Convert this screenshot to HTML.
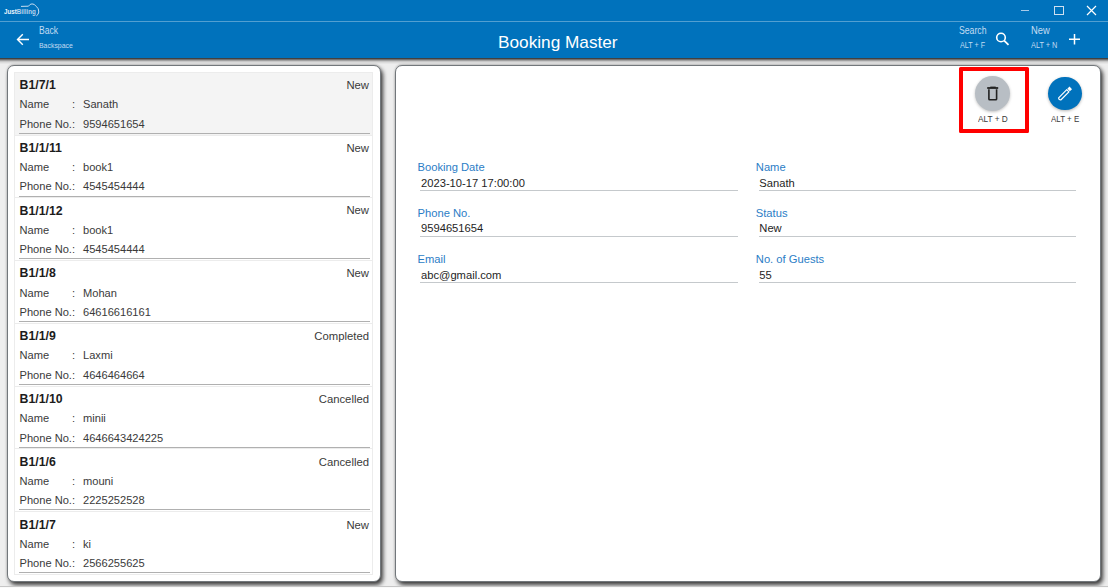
<!DOCTYPE html>
<html><head><meta charset="utf-8"><style>
html,body{margin:0;padding:0;}
body{width:1108px;height:588px;overflow:hidden;position:relative;background:#eeeeee;font-family:"Liberation Sans", sans-serif;}
.t{position:absolute;white-space:nowrap;line-height:1;}
</style></head><body>
<div style="position:absolute;left:0;top:0;width:1108px;height:58px;background:#0072bc;"></div>
<div style="position:absolute;left:0;top:21px;width:1108px;height:1px;background:rgba(255,255,255,0.32);"></div>
<div style="position:absolute;left:0;top:58px;width:1108px;height:1px;background:rgba(0,0,0,0.73);"></div>
<div style="position:absolute;left:0;top:59px;width:1108px;height:1px;background:rgba(0,0,0,0.53);"></div>
<div style="position:absolute;left:0;top:60px;width:1108px;height:1px;background:rgba(0,0,0,0.33);"></div>
<div style="position:absolute;left:0;top:61px;width:1108px;height:1px;background:rgba(0,0,0,0.16);"></div>
<div style="position:absolute;left:0;top:62px;width:1108px;height:1px;background:rgba(0,0,0,0.08);"></div>
<div style="position:absolute;left:0;top:63px;width:1108px;height:1px;background:rgba(0,0,0,0.03);"></div>
<div class="t" style="left:4.00px;top:7.87px;font-size:7px;color:#eef5fb;font-weight:bold;transform:scaleX(0.8888);transform-origin:0 0;">Just<span style="color:#b9d3ec">Billing</span></div>
<svg style="position:absolute;left:20px;top:3px" width="20" height="14" viewBox="0 0 20 14"><path d="M1 3.4 L8.5 3.2 Q10 0.8 12 0.9 Q14.8 1 15.5 2.8 Q19.2 5 18.8 9 Q18.5 11.8 16.3 12.9" fill="none" stroke="#dce9f6" stroke-width="0.9"/></svg>
<div style="position:absolute;left:1021px;top:10px;width:8px;height:1px;background:#a8cbea;"></div>
<div style="position:absolute;left:1054px;top:6px;width:8px;height:7px;border:1px solid #cfe0f0;"></div>
<svg style="position:absolute;left:1086px;top:5px" width="11" height="11" viewBox="0 0 11 11"><path d="M1 1L10 10M10 1L1 10" stroke="#fff" stroke-width="1.2"/></svg>
<svg style="position:absolute;left:16px;top:33px" width="14" height="13" viewBox="0 0 14 13"><path d="M13 6.5H1.5M6.8 1.2L1.5 6.5L6.8 11.8" fill="none" stroke="#fff" stroke-width="1.4"/></svg>
<div class="t" style="left:39.10px;top:24.69px;font-size:11px;color:#c4dcf2;font-weight:normal;transform:scaleX(0.7804);transform-origin:0 0;">Back</div>
<div class="t" style="left:39.10px;top:41.73px;font-size:8px;color:#c4dcf2;font-weight:normal;transform:scaleX(0.8662);transform-origin:0 0;">Backspace</div>
<div class="t" style="left:498.20px;top:33.81px;font-size:17px;color:#ffffff;font-weight:normal;transform:scaleX(1.0126);transform-origin:0 0;">Booking Master</div>
<div class="t" style="left:959.00px;top:25.11px;font-size:10.5px;color:#c4dcf2;font-weight:normal;transform:scaleX(0.8267);transform-origin:0 0;">Search</div>
<div class="t" style="left:960.00px;top:41.30px;font-size:8.5px;color:#c4dcf2;font-weight:normal;transform:scaleX(0.8423);transform-origin:0 0;">ALT + F</div>
<svg style="position:absolute;left:995.3px;top:32.2px" width="15" height="14" viewBox="0 0 15 14"><circle cx="6" cy="5.5" r="4.3" fill="none" stroke="#fff" stroke-width="1.6"/><path d="M9.2 8.7L13.5 12.8" stroke="#fff" stroke-width="1.8"/></svg>
<div class="t" style="left:1030.60px;top:25.11px;font-size:10.5px;color:#c4dcf2;font-weight:normal;transform:scaleX(0.8939);transform-origin:0 0;">New</div>
<div class="t" style="left:1030.60px;top:41.30px;font-size:8.5px;color:#c4dcf2;font-weight:normal;transform:scaleX(0.8618);transform-origin:0 0;">ALT + N</div>
<svg style="position:absolute;left:1068.9px;top:34.1px" width="11" height="11" viewBox="0 0 11 11"><path d="M5.5 0V10.6M0 5.3H11" stroke="#fff" stroke-width="1.5"/></svg>
<div style="position:absolute;background:#fff;border:1px solid #72777b;border-radius:7px;box-shadow:2px 3px 4px rgba(0,0,0,0.75),0 -1px 2px rgba(0,0,0,0.18);box-sizing:border-box;left:7px;top:65px;width:374px;height:517px;"></div>
<div style="position:absolute;background:#fff;border:1px solid #72777b;border-radius:7px;box-shadow:2px 3px 4px rgba(0,0,0,0.75),0 -1px 2px rgba(0,0,0,0.18);box-sizing:border-box;left:395px;top:65px;width:706px;height:517px;"></div>
<div style="position:absolute;left:14px;top:72px;width:359px;height:64px;background:#f4f4f4;box-sizing:border-box;border:1px solid #ececec;"></div>
<div style="position:absolute;left:19px;top:133px;width:351px;height:1px;background:#b0b0b0;"></div>
<div class="t" style="left:19.50px;top:78.89px;font-size:12.3px;color:#1c1c1c;font-weight:bold;">B1/7/1</div>
<div class="t" style="right:739.00px;top:79.73px;font-size:11.3px;color:#3a3a3a;font-weight:normal;text-align:right;">New</div>
<div class="t" style="left:19.50px;top:99.10px;font-size:11.1px;color:#3a3a3a;font-weight:normal;">Name</div>
<div class="t" style="left:72.00px;top:99.10px;font-size:11.1px;color:#3a3a3a;font-weight:normal;">:</div>
<div class="t" style="left:83.00px;top:99.10px;font-size:11.1px;color:#3a3a3a;font-weight:normal;">Sanath</div>
<div class="t" style="left:19.50px;top:118.50px;font-size:11.1px;color:#3a3a3a;font-weight:normal;">Phone No.:</div>
<div class="t" style="left:83.00px;top:118.50px;font-size:11.1px;color:#3a3a3a;font-weight:normal;">9594651654</div>
<div style="position:absolute;left:14px;top:135px;width:359px;height:64px;background:#ffffff;box-sizing:border-box;border:1px solid #ececec;"></div>
<div style="position:absolute;left:19px;top:196px;width:351px;height:1px;background:#b0b0b0;"></div>
<div class="t" style="left:19.50px;top:141.72px;font-size:12.3px;color:#1c1c1c;font-weight:bold;">B1/1/11</div>
<div class="t" style="right:739.00px;top:142.56px;font-size:11.3px;color:#3a3a3a;font-weight:normal;text-align:right;">New</div>
<div class="t" style="left:19.50px;top:161.93px;font-size:11.1px;color:#3a3a3a;font-weight:normal;">Name</div>
<div class="t" style="left:72.00px;top:161.93px;font-size:11.1px;color:#3a3a3a;font-weight:normal;">:</div>
<div class="t" style="left:83.00px;top:161.93px;font-size:11.1px;color:#3a3a3a;font-weight:normal;">book1</div>
<div class="t" style="left:19.50px;top:181.33px;font-size:11.1px;color:#3a3a3a;font-weight:normal;">Phone No.:</div>
<div class="t" style="left:83.00px;top:181.33px;font-size:11.1px;color:#3a3a3a;font-weight:normal;">4545454444</div>
<div style="position:absolute;left:14px;top:197px;width:359px;height:64px;background:#ffffff;box-sizing:border-box;border:1px solid #ececec;"></div>
<div style="position:absolute;left:19px;top:258px;width:351px;height:1px;background:#b0b0b0;"></div>
<div class="t" style="left:19.50px;top:204.55px;font-size:12.3px;color:#1c1c1c;font-weight:bold;">B1/1/12</div>
<div class="t" style="right:739.00px;top:205.39px;font-size:11.3px;color:#3a3a3a;font-weight:normal;text-align:right;">New</div>
<div class="t" style="left:19.50px;top:224.76px;font-size:11.1px;color:#3a3a3a;font-weight:normal;">Name</div>
<div class="t" style="left:72.00px;top:224.76px;font-size:11.1px;color:#3a3a3a;font-weight:normal;">:</div>
<div class="t" style="left:83.00px;top:224.76px;font-size:11.1px;color:#3a3a3a;font-weight:normal;">book1</div>
<div class="t" style="left:19.50px;top:244.16px;font-size:11.1px;color:#3a3a3a;font-weight:normal;">Phone No.:</div>
<div class="t" style="left:83.00px;top:244.16px;font-size:11.1px;color:#3a3a3a;font-weight:normal;">4545454444</div>
<div style="position:absolute;left:14px;top:260px;width:359px;height:64px;background:#ffffff;box-sizing:border-box;border:1px solid #ececec;"></div>
<div style="position:absolute;left:19px;top:321px;width:351px;height:1px;background:#b0b0b0;"></div>
<div class="t" style="left:19.50px;top:267.38px;font-size:12.3px;color:#1c1c1c;font-weight:bold;">B1/1/8</div>
<div class="t" style="right:739.00px;top:268.22px;font-size:11.3px;color:#3a3a3a;font-weight:normal;text-align:right;">New</div>
<div class="t" style="left:19.50px;top:287.59px;font-size:11.1px;color:#3a3a3a;font-weight:normal;">Name</div>
<div class="t" style="left:72.00px;top:287.59px;font-size:11.1px;color:#3a3a3a;font-weight:normal;">:</div>
<div class="t" style="left:83.00px;top:287.59px;font-size:11.1px;color:#3a3a3a;font-weight:normal;">Mohan</div>
<div class="t" style="left:19.50px;top:306.99px;font-size:11.1px;color:#3a3a3a;font-weight:normal;">Phone No.:</div>
<div class="t" style="left:83.00px;top:306.99px;font-size:11.1px;color:#3a3a3a;font-weight:normal;">64616616161</div>
<div style="position:absolute;left:14px;top:323px;width:359px;height:64px;background:#ffffff;box-sizing:border-box;border:1px solid #ececec;"></div>
<div style="position:absolute;left:19px;top:384px;width:351px;height:1px;background:#b0b0b0;"></div>
<div class="t" style="left:19.50px;top:330.21px;font-size:12.3px;color:#1c1c1c;font-weight:bold;">B1/1/9</div>
<div class="t" style="right:739.00px;top:331.05px;font-size:11.3px;color:#3a3a3a;font-weight:normal;text-align:right;">Completed</div>
<div class="t" style="left:19.50px;top:350.42px;font-size:11.1px;color:#3a3a3a;font-weight:normal;">Name</div>
<div class="t" style="left:72.00px;top:350.42px;font-size:11.1px;color:#3a3a3a;font-weight:normal;">:</div>
<div class="t" style="left:83.00px;top:350.42px;font-size:11.1px;color:#3a3a3a;font-weight:normal;">Laxmi</div>
<div class="t" style="left:19.50px;top:369.82px;font-size:11.1px;color:#3a3a3a;font-weight:normal;">Phone No.:</div>
<div class="t" style="left:83.00px;top:369.82px;font-size:11.1px;color:#3a3a3a;font-weight:normal;">4646464664</div>
<div style="position:absolute;left:14px;top:386px;width:359px;height:64px;background:#ffffff;box-sizing:border-box;border:1px solid #ececec;"></div>
<div style="position:absolute;left:19px;top:447px;width:351px;height:1px;background:#b0b0b0;"></div>
<div class="t" style="left:19.50px;top:393.04px;font-size:12.3px;color:#1c1c1c;font-weight:bold;">B1/1/10</div>
<div class="t" style="right:739.00px;top:393.88px;font-size:11.3px;color:#3a3a3a;font-weight:normal;text-align:right;">Cancelled</div>
<div class="t" style="left:19.50px;top:413.25px;font-size:11.1px;color:#3a3a3a;font-weight:normal;">Name</div>
<div class="t" style="left:72.00px;top:413.25px;font-size:11.1px;color:#3a3a3a;font-weight:normal;">:</div>
<div class="t" style="left:83.00px;top:413.25px;font-size:11.1px;color:#3a3a3a;font-weight:normal;">minii</div>
<div class="t" style="left:19.50px;top:432.65px;font-size:11.1px;color:#3a3a3a;font-weight:normal;">Phone No.:</div>
<div class="t" style="left:83.00px;top:432.65px;font-size:11.1px;color:#3a3a3a;font-weight:normal;">4646643424225</div>
<div style="position:absolute;left:14px;top:448px;width:359px;height:64px;background:#ffffff;box-sizing:border-box;border:1px solid #ececec;"></div>
<div style="position:absolute;left:19px;top:509px;width:351px;height:1px;background:#b0b0b0;"></div>
<div class="t" style="left:19.50px;top:455.87px;font-size:12.3px;color:#1c1c1c;font-weight:bold;">B1/1/6</div>
<div class="t" style="right:739.00px;top:456.71px;font-size:11.3px;color:#3a3a3a;font-weight:normal;text-align:right;">Cancelled</div>
<div class="t" style="left:19.50px;top:476.08px;font-size:11.1px;color:#3a3a3a;font-weight:normal;">Name</div>
<div class="t" style="left:72.00px;top:476.08px;font-size:11.1px;color:#3a3a3a;font-weight:normal;">:</div>
<div class="t" style="left:83.00px;top:476.08px;font-size:11.1px;color:#3a3a3a;font-weight:normal;">mouni</div>
<div class="t" style="left:19.50px;top:495.48px;font-size:11.1px;color:#3a3a3a;font-weight:normal;">Phone No.:</div>
<div class="t" style="left:83.00px;top:495.48px;font-size:11.1px;color:#3a3a3a;font-weight:normal;">2225252528</div>
<div style="position:absolute;left:14px;top:511px;width:359px;height:64px;background:#ffffff;box-sizing:border-box;border:1px solid #ececec;"></div>
<div style="position:absolute;left:19px;top:572px;width:351px;height:1px;background:#b0b0b0;"></div>
<div class="t" style="left:19.50px;top:518.70px;font-size:12.3px;color:#1c1c1c;font-weight:bold;">B1/1/7</div>
<div class="t" style="right:739.00px;top:519.54px;font-size:11.3px;color:#3a3a3a;font-weight:normal;text-align:right;">New</div>
<div class="t" style="left:19.50px;top:538.91px;font-size:11.1px;color:#3a3a3a;font-weight:normal;">Name</div>
<div class="t" style="left:72.00px;top:538.91px;font-size:11.1px;color:#3a3a3a;font-weight:normal;">:</div>
<div class="t" style="left:83.00px;top:538.91px;font-size:11.1px;color:#3a3a3a;font-weight:normal;">ki</div>
<div class="t" style="left:19.50px;top:558.31px;font-size:11.1px;color:#3a3a3a;font-weight:normal;">Phone No.:</div>
<div class="t" style="left:83.00px;top:558.31px;font-size:11.1px;color:#3a3a3a;font-weight:normal;">2566255625</div>
<div class="t" style="left:417.50px;top:161.62px;font-size:11.2px;color:#2b7dc6;font-weight:normal;">Booking Date</div>
<div class="t" style="left:421.00px;top:177.92px;font-size:11.2px;color:#1e1e1e;font-weight:normal;">2023-10-17 17:00:00</div>
<div style="position:absolute;left:419.5px;top:190.0px;width:318px;height:1px;background:#c5c9cc;"></div>
<div class="t" style="left:755.80px;top:161.62px;font-size:11.2px;color:#2b7dc6;font-weight:normal;">Name</div>
<div class="t" style="left:759.30px;top:177.92px;font-size:11.2px;color:#1e1e1e;font-weight:normal;">Sanath</div>
<div style="position:absolute;left:759px;top:190.0px;width:316.5px;height:1px;background:#c5c9cc;"></div>
<div class="t" style="left:417.50px;top:207.82px;font-size:11.2px;color:#2b7dc6;font-weight:normal;">Phone No.</div>
<div class="t" style="left:421.00px;top:223.32px;font-size:11.2px;color:#1e1e1e;font-weight:normal;">9594651654</div>
<div style="position:absolute;left:419.5px;top:236.1px;width:318px;height:1px;background:#c5c9cc;"></div>
<div class="t" style="left:755.80px;top:207.82px;font-size:11.2px;color:#2b7dc6;font-weight:normal;">Status</div>
<div class="t" style="left:759.30px;top:223.32px;font-size:11.2px;color:#1e1e1e;font-weight:normal;">New</div>
<div style="position:absolute;left:759px;top:236.1px;width:316.5px;height:1px;background:#c5c9cc;"></div>
<div class="t" style="left:417.50px;top:253.52px;font-size:11.2px;color:#2b7dc6;font-weight:normal;">Email</div>
<div class="t" style="left:421.00px;top:269.52px;font-size:11.2px;color:#1e1e1e;font-weight:normal;">abc@gmail.com</div>
<div style="position:absolute;left:419.5px;top:281.6px;width:318px;height:1px;background:#c5c9cc;"></div>
<div class="t" style="left:755.80px;top:253.52px;font-size:11.2px;color:#2b7dc6;font-weight:normal;">No. of Guests</div>
<div class="t" style="left:759.30px;top:269.52px;font-size:11.2px;color:#1e1e1e;font-weight:normal;">55</div>
<div style="position:absolute;left:759px;top:281.6px;width:316.5px;height:1px;background:#c5c9cc;"></div>
<div style="position:absolute;left:975px;top:75.5px;width:35px;height:35px;border-radius:50%;background:#b8bec4;box-shadow:0 1px 3px rgba(0,0,0,0.25);"></div>
<svg style="position:absolute;left:986px;top:85px" width="14" height="17" viewBox="0 0 14 17"><path d="M1.2 3H12.2" stroke="#222" stroke-width="1.8"/><path d="M4.3 2.3H9.7" stroke="#222" stroke-width="1.4"/><path d="M2.9 4.2V13.9Q2.9 14.7 3.7 14.7H9.8Q10.6 14.7 10.6 13.9V4.2" fill="none" stroke="#222" stroke-width="1.6"/></svg>
<div class="t" style="left:977.90px;top:114.81px;font-size:9.2px;color:#3a3a3a;font-weight:normal;transform:scaleX(0.9018);transform-origin:0 0;">ALT + D</div>
<div style="position:absolute;left:1048.3px;top:76.5px;width:33.5px;height:33.5px;border-radius:50%;background:#0072bc;box-shadow:0 1px 3px rgba(0,0,0,0.3);"></div>
<svg style="position:absolute;left:1048px;top:76px" width="34" height="34" viewBox="0 0 34 34"><g transform="translate(16.8 17.8) rotate(-45)"><path d="M-7.2 -1.5H4.3V1.5H-7.2Q-8.7 0 -7.2 -1.5Z" fill="none" stroke="#fff" stroke-width="1.2" stroke-linejoin="round"/><rect x="5.4" y="-1.8" width="3" height="3.6" fill="#fff"/></g></svg>
<div class="t" style="left:1050.70px;top:114.81px;font-size:9.2px;color:#3a3a3a;font-weight:normal;transform:scaleX(0.8670);transform-origin:0 0;">ALT + E</div>
<div style="position:absolute;left:959px;top:67px;width:70px;height:66px;border:4.3px solid #ff0000;border-radius:1.5px;box-sizing:border-box;"></div>
<div style="position:absolute;left:0;top:586px;width:1108px;height:1px;background:#c6c6c6;"></div>
<div style="position:absolute;left:0;top:587px;width:1108px;height:1px;background:#fafafa;"></div>
</body></html>
